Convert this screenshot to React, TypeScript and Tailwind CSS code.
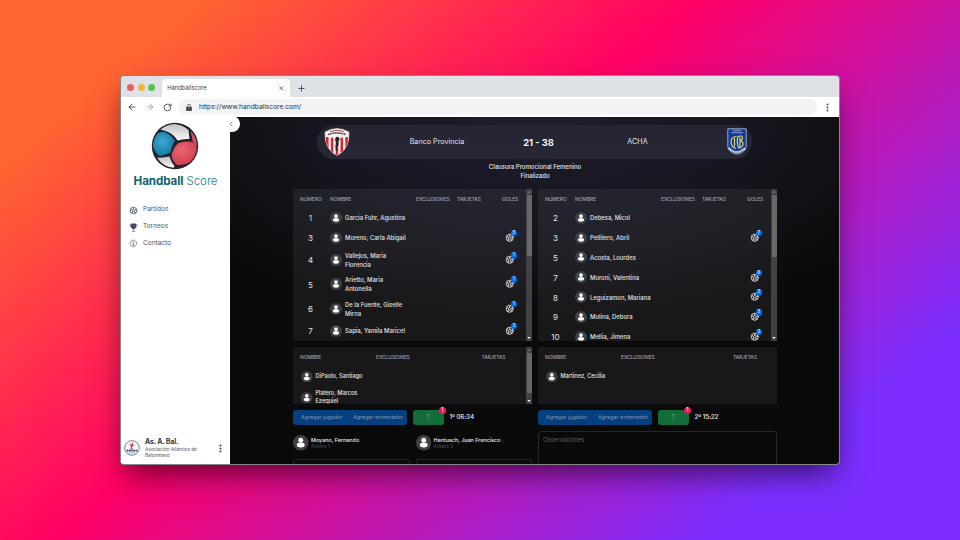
import React from "react";
import { IoFootballOutline, IoInformationCircleOutline, IoTrophy } from "react-icons/io5";
import { ArrowLeft, ArrowRight, ChevronLeft, Plus, RotateCw, X } from "lucide-react";

type Player = { n: number; name: string[]; goals?: number };

const home: Player[] = [
  { n: 1, name: ["García Fuhr, Agustina"] },
  { n: 3, name: ["Moreno, Carla Abigail"], goals: 3 },
  { n: 4, name: ["Vallejos, Maria", "Florencia"], goals: 1 },
  { n: 5, name: ["Arietto, Maria", "Antonella"], goals: 1 },
  { n: 6, name: ["De la Fuente, Giselle", "Mirna"], goals: 1 },
  { n: 7, name: ["Sapia, Yamila Maricel"], goals: 2 },
];

const away: Player[] = [
  { n: 2, name: ["Debesa, Micol"] },
  { n: 3, name: ["Pellitero, Abril"], goals: 7 },
  { n: 5, name: ["Acosta, Lourdes"] },
  { n: 7, name: ["Moroni, Valentina"], goals: 6 },
  { n: 8, name: ["Leguizamon, Mariana"], goals: 2 },
  { n: 9, name: ["Molina, Debora"], goals: 3 },
  { n: 10, name: ["Mellia, Jimena"], goals: 2 },
];

function Avatar({ className = "size-3" }: { className?: string }) {
  return (
    <svg viewBox="0 0 24 24" className={`shrink-0 ${className}`}>
      <circle cx="12" cy="12" r="12" fill="#3f3f46" />
      <circle cx="12" cy="8.2" r="3.8" fill="#fff" />
      <ellipse cx="12" cy="15.6" rx="6.2" ry="3.8" fill="#fff" />
    </svg>
  );
}

function Dots({ className }: { className: string }) {
  return (
    <svg viewBox="0 0 4 12" className={className} fill="currentColor">
      <circle cx="2" cy="2" r="1.3" />
      <circle cx="2" cy="6" r="1.3" />
      <circle cx="2" cy="10" r="1.3" />
    </svg>
  );
}

function Scrollbar({ thumb }: { thumb: string }) {
  return (
    <div className="flex w-1.5 shrink-0 flex-col items-center bg-[#424242]">
      <svg viewBox="0 0 6 6" className="h-1.5 w-1.5 shrink-0">
        <path d="M1.5 3.8 3 2l1.5 1.8z" fill="#858585" />
      </svg>
      <div className={`w-[5px] bg-[#686868] ${thumb}`} />
      <svg viewBox="0 0 6 6" className="mt-auto h-1.5 w-1.5 shrink-0">
        <path d="M1.3 2 3 4l1.7-2z" fill="#fff" />
      </svg>
    </div>
  );
}

function Roster({ players, thumb }: { players: Player[]; thumb: string }) {
  return (
    <div className="flex h-[152px] w-[239px] overflow-hidden bg-[#a1a1aa]/10">
      <div className="min-w-0 flex-1">
        <div className="flex h-[19px] items-center pt-[3px] text-[4.9px] font-medium text-[#a1a1aa]">
          <span className="w-[37px] pl-[7px]">NÚMERO</span>
          <span className="w-[86px]">NOMBRE</span>
          <span className="w-[41px] tracking-[-0.05px]">EXCLUSIONES</span>
          <span className="w-[45px] tracking-[-0.1px]">TARJETAS</span>
          <span>GOLES</span>
        </div>
        {players.map((p) => (
          <div
            key={p.n}
            className={`flex items-center text-[#e4e4e7] ${p.name.length > 1 ? "h-[24.4px]" : "h-[19.8px]"}`}
          >
            <span className="w-[35px] pt-px text-center text-[8px]">{p.n}</span>
            <Avatar className="ml-[2px] size-3" />
            <span className="ml-[3px] w-[156px] text-[5.9px] leading-[9px] font-medium">
              {p.name.map((line) => (
                <span key={line} className="block whitespace-nowrap">
                  {line}
                </span>
              ))}
            </span>
            {p.goals !== undefined && (
              <span className="relative ml-[4px]">
                <IoFootballOutline className="size-[9.5px] text-white" strokeWidth={16} stroke="currentColor" />
                <span className="absolute -top-[3px] left-[5.5px] flex size-[6.5px] items-center justify-center rounded-full bg-[#006fee] text-[4.5px] leading-none text-white">
                  {p.goals}
                </span>
              </span>
            )}
          </div>
        ))}
      </div>
      <Scrollbar thumb={thumb} />
    </div>
  );
}

function Staff({ people, scroll }: { people: string[][]; scroll?: boolean }) {
  return (
    <div className="mt-[6px] flex h-[57px] w-[239px] overflow-hidden bg-[#18181b] text-[#e4e4e7]">
      <div className="min-w-0 flex-1">
        <div className="flex h-[19px] items-center pt-[3px] text-[4.9px] font-medium text-[#a1a1aa]">
          <span className="w-[83px] pl-[7px]">NOMBRE</span>
          <span className={scroll ? "w-[105.5px] tracking-[-0.05px]" : "w-[112px] tracking-[-0.05px]"}>EXCLUSIONES</span>
          <span className="tracking-[-0.1px]">TARJETAS</span>
        </div>
        {people.map((name) => (
          <div key={name[0]} className="flex h-[21px] items-center pl-2">
            <Avatar className="size-[11.5px]" />
            <span className="ml-[3px] text-[5.6px] leading-[7.5px] font-medium">
              {name.map((line) => (
                <span key={line} className="block whitespace-nowrap">
                  {line}
                </span>
              ))}
            </span>
          </div>
        ))}
      </div>
      {scroll && <Scrollbar thumb="h-[40px]" />}
    </div>
  );
}

function Actions({ time }: { time: string }) {
  return (
    <div className="mt-[6px] flex h-[15px] items-center">
      <div className="flex h-full w-[114px] items-center justify-between rounded-[3px] bg-[#04407f] pr-[4px] pl-2 text-[5.4px] text-[#8096ae]">
        <span>Agregar jugador</span>
        <span>Agregar entrenador</span>
      </div>
      <div className="relative ml-[6px] flex h-full w-[30.5px] items-center justify-center rounded-[3px] bg-[#126d38] text-[5.5px] text-[#74a487]">
        T
        <span className="absolute -top-[3.5px] -right-[2.5px] flex size-[7.5px] items-center justify-center rounded-full bg-[#f31260] text-[5.5px] leading-none text-white">
          1
        </span>
      </div>
      <span className="ml-[6px] text-[6.3px] font-medium tracking-[-0.1px] text-[#ececee]">{time}</span>
    </div>
  );
}

function Referee({ name, role }: { name: string; role: string }) {
  return (
    <div className="w-[116.5px]">
      <div className="flex h-4 items-center">
        <Avatar className="size-[15.5px]" />
        <div className="ml-[2.5px] whitespace-nowrap">
          <div className="text-[5.4px] leading-[6.5px] font-medium text-[#ececee]">{name}</div>
          <div className="text-[4.8px] leading-[6px] text-[#505057]">{role}</div>
        </div>
      </div>
      <div className="mt-2 h-10 rounded-[3px] border border-[#27272a]" />
    </div>
  );
}

function Ball() {
  return (
    <svg viewBox="0 0 48 48" className="size-[48px]">
      <defs>
        <clipPath id="ball"><circle cx="24" cy="24" r="22" /></clipPath>
        <radialGradient id="blue" cx=".45" cy=".4" r=".7">
          <stop offset="0" stopColor="#3fa9d0" /><stop offset="1" stopColor="#08729c" />
        </radialGradient>
        <radialGradient id="red" cx=".4" cy=".35" r=".75">
          <stop offset="0" stopColor="#ec6572" /><stop offset="1" stopColor="#cf3a4c" />
        </radialGradient>
        <linearGradient id="white" x1="0" y1="0" x2="0" y2="1">
          <stop offset="0" stopColor="#bfc0c2" /><stop offset="1" stopColor="#fafafa" />
        </linearGradient>
      </defs>
      <circle cx="24" cy="24" r="23.2" fill="#20232c" />
      <g clipPath="url(#ball)" strokeLinejoin="round" strokeWidth="1">
        <path d="M9.500 7.500Q16 1 24 2q8 1 13.500 6l1 9Q32 16.500 26.500 18.500 22.500 12 16 9.500z" fill="url(#white)" />
        <path d="M1.500 22Q3 15 7 11q4-1.500 8-.5 5 2.500 9 8-3.500 5-4.500 12Q14 33 8.500 34 3 30 1.500 22z" fill="url(#blue)" />
        <path d="M27.500 21Q35 18.500 41.500 20q4.500 3 4.500 8.500-1 6-4 10-7 5-16 4.500Q21 39 20.500 32.500 23 25 27.500 21z" fill="url(#red)" />
        <path d="M39.500 8.500Q45 14 46.500 22l-1.500 3-3.500-6.500z" fill="#cf5361" />
        <path d="M6 35.500q6 .5 12.500-1 1.500 6 5 9.500l-1 2Q12 45 6 35.500z" fill="url(#white)" />
      </g>
    </svg>
  );
}

function CrestHome() {
  return (
    <svg viewBox="0 0 26 28" className="h-7 w-[26px]">
      <defs>
        <clipPath id="shield"><path d="M1 4Q13-3 25 4q1 17-12 23.5Q0 21 1 4z" /></clipPath>
      </defs>
      <g clipPath="url(#shield)">
        <path d="M0 0h26v28H0z" fill="#fff" />
        <path d="M2 9h2.6v19H2zM6.8 9h2.6v19H6.8zM11.6 9h2.7v19h-2.7zM16.5 9h2.6v19h-2.6zM21.3 9h2.6v19h-2.6z" fill="#df2429" />
        <path d="M0 0h26v8Q13 12 0 8z" fill="#f2eeee" />
        <path d="M4 6.5Q13 3.500 22 6.500" fill="none" stroke="#333" strokeWidth="1.500" strokeDasharray="1.300 .5" />
        <path d="M6 3.500Q13 1 20 3.500" fill="none" stroke="#c44" />
        <path d="M11 11l1.500-2.300 2.300.5 1 2.300-1.500 2 .5 3-2 3 1 3-1.800.5-.5-5 .7-3z" fill="#26222a" />
      </g>
      <path d="M1 4Q13-3 25 4q1 17-12 23.5Q0 21 1 4z" fill="none" stroke="#c9b3b5" strokeWidth=".6" />
    </svg>
  );
}

function CrestAway() {
  return (
    <svg viewBox="0 0 20 27" className="h-[27px] w-5">
      <path d="M.8.8h18.400v18Q18 24.500 10 26.300 2 24.500.8 18.800z" fill="#123a9b" stroke="#b8c6e4" strokeWidth=".8" />
      <path d="M6 2.700h8M4 4.700h12" stroke="#9eb4df" strokeWidth=".8" />
      <path d="M9.500 8.200Q4 9 4 14t5 6.500M7.500 10v8.500M11 8.500Q9.500 13 11.500 20M11 8.500q4-1.500 4.500 1.200 0 2.300-2.500 3 3.500.8 3 4-1 3.300-4.500 3.300M13 9.500v9.500" fill="none" stroke="#e9d663" strokeWidth="1.150" />
      <path d="M1.800 20q7.500 8 16.400 0" fill="none" stroke="#e5eaf4" strokeWidth="2" strokeDasharray="1.300 .4" />
    </svg>
  );
}

function LeagueLogo() {
  return (
    <svg viewBox="0 0 16 16" className="size-4 shrink-0">
      <circle cx="8" cy="8" r="7.300" fill="#fff" stroke="#48648b" strokeWidth=".8" />
      <path d="M8.500 2.200l1 1-.8 1.300 2 1.500-2.200.2-.3 1.800 1.500 2-2-1-2 1.500 1.300-3-.7-2L4.800 4.300l2.500.3z" fill="#d94141" />
      <path d="M2.500 10.700h11" stroke="#24426f" strokeWidth="1.700" strokeDasharray="1.500 .4" />
      <path d="M4.500 13h7" stroke="#7891b4" strokeWidth=".8" />
    </svg>
  );
}

export default function App() {
  return (
    <div className="flex h-[540px] w-[960px] items-start justify-center overflow-hidden bg-[linear-gradient(140deg,#ff6432_12.8%,#ff0065_43.52%,#7b2eff_84.34%)] pt-[75px] font-['Inter','Liberation_Sans',sans-serif]">
      <div className="flex h-[390px] w-[720px] flex-col overflow-hidden rounded-[4px] border border-[#85858a] bg-[#dee1e6] shadow-[0_14px_28px_-6px_rgba(0,0,0,0.6)]">
        <div className="flex h-[21px] shrink-0 items-start">
          <div className="flex gap-[3.600px] pt-[7.500px] pl-[6px]">
            <i className="size-[7px] rounded-full bg-[#e2635b]" />
            <i className="size-[7px] rounded-full bg-[#f0b549]" />
            <i className="size-[7px] rounded-full bg-[#5dbf53]" />
          </div>
          <div className="mt-[3px] ml-[7px] flex h-[18px] w-[128px] items-center justify-between rounded-t-[4px] bg-white pr-[6px] pl-[5px] text-[5.800px] text-[#3c4043]">
            <span>Handballscore</span>
            <X className="mt-px size-[6.500px]" strokeWidth={2.500} />
          </div>
          <Plus className="mt-[8px] ml-[7px] size-[9px] text-[#4b4f54]" strokeWidth={2.500} />
        </div>
        <div className="flex h-5 shrink-0 items-center bg-white text-[#4d5156]">
          <ArrowLeft className="ml-[6px] size-[10px]" strokeWidth={2.300} />
          <ArrowRight className="ml-2 size-[10px] text-[#a7a9ac]" strokeWidth={2.300} />
          <RotateCw className="ml-2 size-[9px]" strokeWidth={2.500} />
          <div className="ml-[7px] flex h-4 w-[638px] items-center rounded-full bg-[#f1f3f4] pl-[7px]">
            <svg viewBox="0 0 10 12" className="mt-px h-[7px] w-[6px]">
              <rect y="4.500" width="10" height="7.500" rx="1" fill="#4d5156" />
              <path d="M2.500 5V3a2.500 2.500 0 0 1 5 0v2" fill="none" stroke="#4d5156" strokeWidth="1.400" />
            </svg>
            <span className="mt-px ml-[7px] text-[6.650px] text-[#303236]">https://www.handballscore.com/</span>
          </div>
          <Dots className="ml-[9px] h-[9px] w-[3px]" />
        </div>

        <div className="flex min-h-0 flex-1">
          <aside className="relative z-10 flex w-[109px] shrink-0 flex-col bg-white">
            <div className="mt-[5px] flex justify-center pr-px"><Ball /></div>
            <div className="mt-[3px] text-center text-[11.600px] leading-4 font-light tracking-[-0.080px] whitespace-nowrap text-[#287d8e]">
              <b className="font-bold text-[#0f6072]">Handball</b> Score
            </div>
            <nav className="mt-[13px] flex flex-col pl-2 text-[6.500px] text-[#52525b]">
              <div className="flex h-[16.700px] items-center gap-[5px]">
                <IoFootballOutline className="size-[9px] text-[#3f4a5a]" strokeWidth={12} stroke="currentColor" />Partidos
              </div>
              <div className="flex h-[16.700px] items-center gap-[5px]">
                <IoTrophy className="size-[9px] text-[#3f4a5a]" />Torneos
              </div>
              <div className="flex h-[16.700px] items-center gap-[5px]">
                <IoInformationCircleOutline className="size-[9px] text-[#3f4a5a]" strokeWidth={12} stroke="currentColor" />Contacto
              </div>
            </nav>
            <div className="mt-auto mb-[6px] flex items-center pl-[3px]">
              <LeagueLogo />
              <div className="ml-[5px] w-[70px] whitespace-nowrap">
                <div className="text-[7px] leading-[8px] font-bold tracking-[-0.150px] text-[#27374a]">As. A. Bal.</div>
                <div className="text-[4.700px] leading-[6px] text-[#4b5563]">
                  Asociación Atlántica de<br />Balonmano
                </div>
              </div>
              <Dots className="ml-[4px] h-[9px] w-[3px] text-[#374151]" />
            </div>
            <div className="absolute top-[-1px] -right-[10px] flex h-4 w-[18px] items-center justify-center rounded-br-full rounded-tr-full bg-white text-[#4b5563]">
              <ChevronLeft className="-ml-[1px] size-[8px]" strokeWidth={2} />
            </div>
          </aside>

          <main className="min-w-0 flex-1 overflow-hidden bg-[radial-gradient(ellipse_70%_60%_at_50%_0%,#1e1e2d_0%,#161620_50%,#0a0a0a_100%)] pl-[63px]">
            <div className="mt-[8px] ml-6 flex h-[34px] w-[435px] items-center rounded-full bg-linear-to-b from-[#242432] to-[#272735] text-[7.200px] text-[#e4e4e7]">
              <div className="flex w-[57px] pl-[7px]"><CrestHome /></div>
              <div className="w-[126px] pt-px text-center">Banco Provincia</div>
              <div className="w-[77px] pt-px text-center text-[9.300px] font-bold text-[#f1f1f4]">21 - 38</div>
              <div className="w-[121px] pt-px text-center">ACHA</div>
              <div className="ml-auto pr-[5.500px] pb-px"><CrestAway /></div>
            </div>
            <div className="mt-[3px] ml-[121px] w-[242px] text-center text-[6.100px] leading-[9px] font-medium tracking-[-0.050px] text-[#e4e4e7]">
              Clausura Promocional Femenino<br />Finalizado
            </div>
            <div className="mt-[9px] flex gap-[6px]">
              <section className="w-[239px] shrink-0">
                <Roster players={home} thumb="h-[61px]" />
                <Staff people={[["DiPaolo, Santiago"], ["Platero, Marcos", "Ezequiel"]]} scroll />
                <Actions time="1º 06:34" />
                <div className="mt-[10px] flex gap-[6px]">
                  <Referee name="Moyano, Fernando" role="Árbitro 1" />
                  <Referee name="Hantusch, Juan Francisco" role="Árbitro 2" />
                </div>
              </section>
              <section className="w-[239px] shrink-0">
                <Roster players={away} thumb="h-[62px]" />
                <Staff people={[["Martinez, Cecilia"]]} />
                <Actions time="2º 15:22" />
                <div className="mt-[6px] h-[80px] rounded-[3px] border border-[#27272a] px-[4px] py-[4px] text-[5.800px] leading-[7px] text-[#5d5d64]">
                  Observaciones
                </div>
              </section>
            </div>
          </main>
        </div>
      </div>
    </div>
  );
}
